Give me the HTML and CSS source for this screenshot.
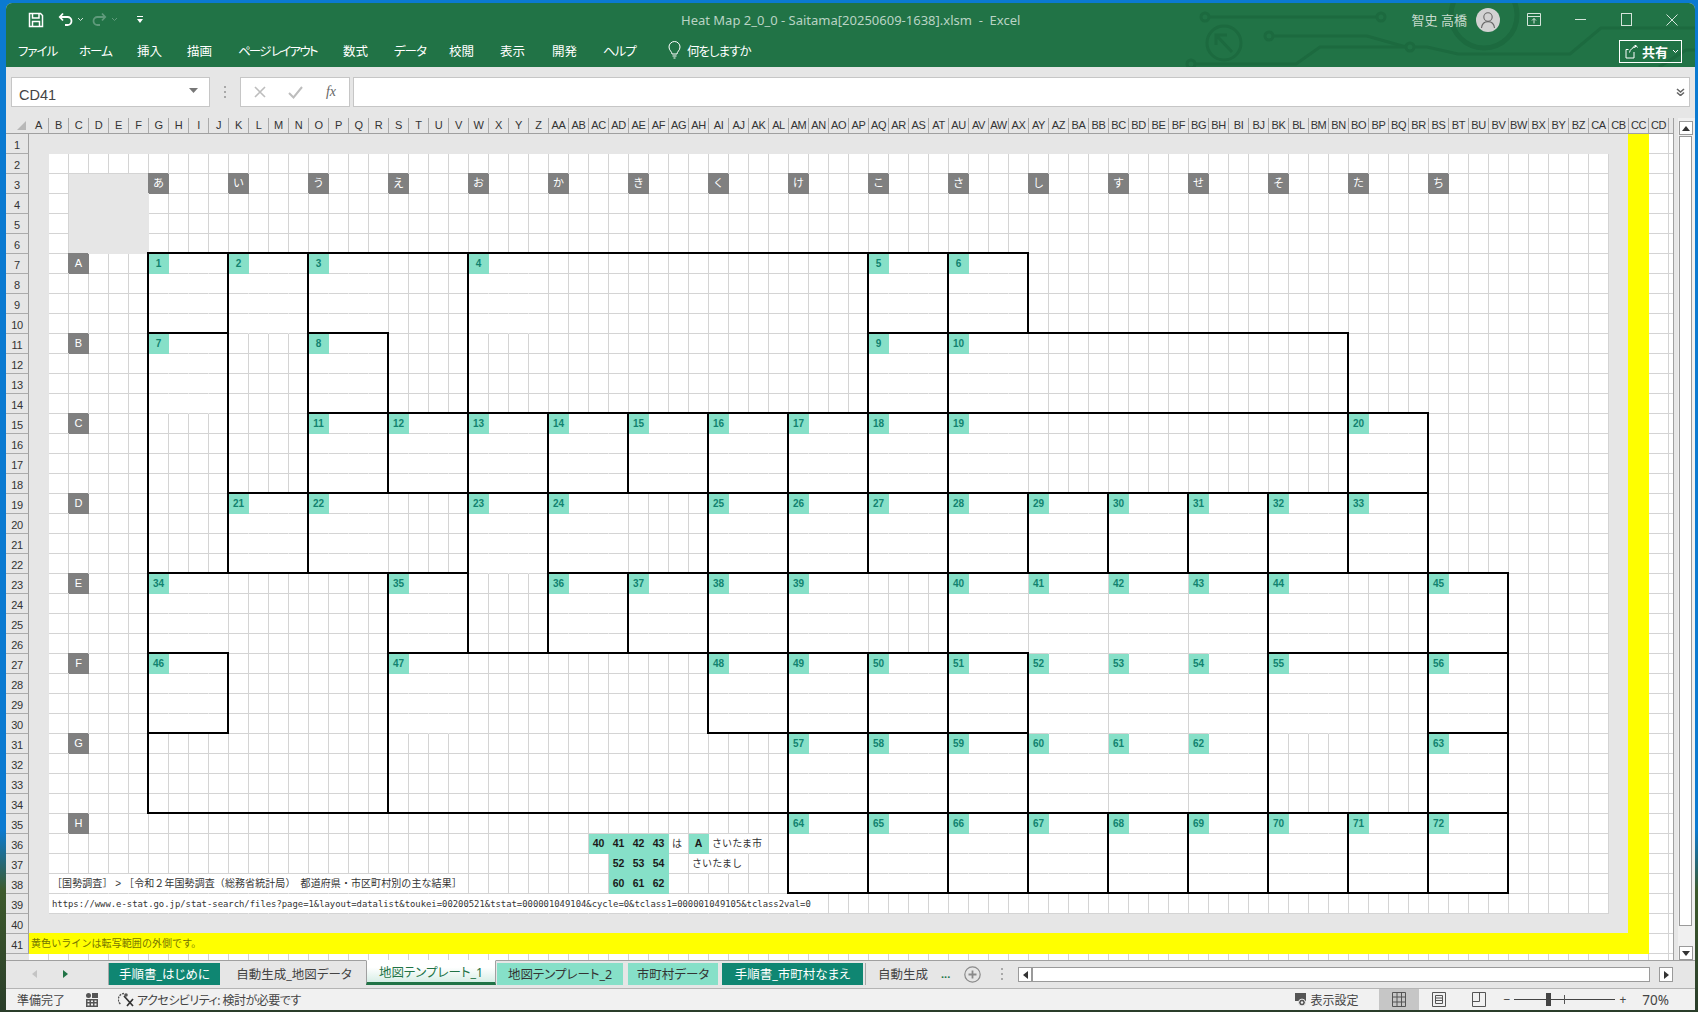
FILE: index.html
```html
<!DOCTYPE html>
<html lang="ja">
<head>
    <meta charset="UTF-8">
    <meta name="viewport" content="width=device-width, initial-scale=1.0">
    <title>Heat Map 2_0_0 - Saitama - Excel</title>
    <link rel="stylesheet" href="styles.css">
</head>
<body>
    <div class="window">
        <!-- Ribbon -->
        <div class="ribbon">
            <svg class="circuit" width="1689" height="64" viewBox="6 3 1689 64" fill="none" stroke="#1c6a3f" stroke-width="3">
                <circle cx="1205" cy="17" r="4"/>
                <path d="M1209 17H1377"/>
                <circle cx="1381" cy="17" r="4"/>
                <circle cx="1224" cy="43" r="17"/>
                <path d="M1232 52L1217 36M1216 45V35H1227"/>
                <circle cx="1269" cy="36" r="4"/>
                <path d="M1273 36H1367L1406 47"/>
                <circle cx="1410" cy="47" r="4"/>
                <circle cx="1191" cy="64" r="4"/>
                <path d="M1195 64H1296L1320 47H1406M1414 47H1427L1458 54H1570L1601 28H1695"/>
                <circle cx="1484" cy="15" r="33" stroke-width="5"/>
                <path d="M1659 67L1686 50H1695"/>
            </svg>
            <div class="titlebar">
                <div class="qat">
                    <svg width="16" height="16" viewBox="0 0 16 16" fill="none" stroke="#fff" stroke-width="1.5"><path d="M1.5 1.5H12.5L14.5 3.5V14.5H1.5Z"/><path d="M4.5 1.5V6H11V1.5M4.5 14.5V9.5H11.5V14.5"/></svg>
                    <svg class="qat-undo" width="15" height="15" viewBox="0 0 15 15" fill="none" stroke="#fff" stroke-width="1.8"><path d="M5 1.5L1.8 5L5 8.5M2 5H9.5A3.6 3.6 0 0 1 9.5 13H7"/></svg>
                    <svg class="qat-chev" width="7" height="5" viewBox="0 0 7 5" fill="none" stroke="#cfe0d6"><path d="M1 1L3.5 3.5L6 1"/></svg>
                    <svg class="qat-redo" width="15" height="15" viewBox="0 0 15 15" fill="none" stroke="#5f9a7b" stroke-width="1.8"><path d="M10 1.5L13.2 5L10 8.5M13 5H5.5A3.6 3.6 0 0 0 5.5 13H8"/></svg>
                    <svg class="qat-chev" width="7" height="5" viewBox="0 0 7 5" fill="none" stroke="#5f9a7b"><path d="M1 1L3.5 3.5L6 1"/></svg>
                    <svg class="qat-more" width="8" height="8" viewBox="0 0 8 8" fill="#fff"><path d="M1 0H7V1H1ZM1 3H7L4 7Z"/></svg>
                </div>
                <div class="doc-title">Heat Map 2_0_0 - Saitama[20250609-1638].xlsm &nbsp;-&nbsp; Excel</div>
                <div class="user-name">智史 高橋</div>
                <div class="avatar">
                    <svg width="24" height="24" viewBox="0 0 24 24" fill="none" stroke="#666" stroke-width="1.1"><circle cx="12" cy="9" r="4.2"/><path d="M5.5 20C6 15.5 8.5 13.6 12 13.6S18 15.5 18.5 20"/></svg>
                </div>
                <div class="win-btn"><svg width="14" height="13" viewBox="0 0 14 13" fill="none" stroke="#d5e4db"><path d="M.5 .5H13.5V12.5H.5ZM.5 3.5H13.5M7 10.5V5.5M5 7.5L7 5.5L9 7.5"/></svg></div>
                <div class="win-btn"><svg width="11" height="11" viewBox="0 0 11 11" stroke="#d5e4db"><path d="M0 5.5H11"/></svg></div>
                <div class="win-btn"><svg width="11" height="13" viewBox="0 0 11 13" fill="none" stroke="#d5e4db"><rect x=".5" y=".5" width="10" height="12"/></svg></div>
                <div class="win-btn"><svg width="12" height="12" viewBox="0 0 12 12" stroke="#d5e4db"><path d="M.5 .5L11.5 11.5M11.5 .5L.5 11.5"/></svg></div>
            </div>
            <div class="menubar">
                <span class="kana">ファイル</span>
                <span class="kana">ホーム</span>
                <span>挿入</span>
                <span>描画</span>
                <span class="kana-long">ページ レイアウト</span>
                <span>数式</span>
                <span class="kana">データ</span>
                <span>校閲</span>
                <span>表示</span>
                <span>開発</span>
                <span class="kana">ヘルプ</span>
                <svg width="13" height="18" viewBox="0 0 13 18" fill="none" stroke="#fff"><path d="M4 13C4 10.5 1 9.5 1 6A5.5 5.5 0 0 1 12 6C12 9.5 9 10.5 9 13ZM4.5 15H8.5M5.5 17H7.5"/></svg>
                <span class="kana">何をしますか</span>
                <div class="share">
                    <svg width="13" height="15" viewBox="0 0 13 15" fill="none" stroke="#fff"><path d="M8 3.5L10.5 1L12.5 3.5M10.5 1V3C7.5 3.5 5 5.5 4.5 8.5M3.5 5.5H1V14H9V8"/></svg>
                    <b>共有</b>
                    <svg width="7" height="5" viewBox="0 0 7 5" fill="none" stroke="#fff"><path d="M1 1L3.5 3.5L6 1"/></svg>
                </div>
            </div>
        </div>

        <!-- Name box and formula bar -->
        <div class="formula-row">
            <div class="name-box">
                <span>CD41</span>
                <svg width="9" height="5" viewBox="0 0 9 5" fill="#777"><path d="M0 0H9L4.5 5Z"/></svg>
            </div>
            <div class="grip"><i></i><i></i><i></i></div>
            <div class="fx-box">
                <svg width="12" height="12" viewBox="0 0 12 12" stroke="#bdbdbd" stroke-width="1.6"><path d="M1 1L11 11M11 1L1 11"/></svg>
                <svg width="15" height="13" viewBox="0 0 15 13" fill="none" stroke="#bdbdbd" stroke-width="2"><path d="M1 7L5.5 11.5L14 1"/></svg>
                <span class="fx">fx</span>
            </div>
            <div class="formula-input">
                <svg width="9" height="8" viewBox="0 0 9 8" fill="none" stroke="#666" stroke-width="1.6"><path d="M1 1L4.5 4L8 1M1 4.5L4.5 7.5L8 4.5"/></svg>
            </div>
        </div>

        <!-- Sheet -->
        <div class="sheet-view">
            <div class="sheet-body">
                <div class="head-row">
                    <div class="corner"><svg width="9" height="9" viewBox="0 0 9 9" fill="#b8b8b8"><path d="M9 0V9H0Z"/></svg></div>
                    <div class="col-heads" id="colHeads"></div>
                </div>
                <div class="grid-row">
                    <div class="row-heads" id="rowHeads"></div>
                    <div class="cells" id="cells"></div>
                </div>
            </div>
            <div class="vscroll">
                <div class="sb-btn"><svg width="8" height="5" viewBox="0 0 8 5" fill="#333"><path d="M4 0L8 5H0Z"/></svg></div>
                <div class="sb-thumb"></div>
                <div class="sb-btn"><svg width="8" height="5" viewBox="0 0 8 5" fill="#333"><path d="M0 0H8L4 5Z"/></svg></div>
            </div>
        </div>

        <!-- Sheet tabs -->
        <div class="tabbar">
            <div class="tab-nav">
                <svg width="5" height="8" viewBox="0 0 5 8" fill="#c4c4c4"><path d="M5 0V8L0 4Z"/></svg>
                <svg width="5" height="8" viewBox="0 0 5 8" fill="#217346"><path d="M0 0V8L5 4Z"/></svg>
            </div>
            <div class="tab tab-dark tab-intro">手順書_はじめに</div>
            <div class="tab tab-plain">自動生成_地図データ</div>
            <div class="tab tab-active">地図テンプレート_1</div>
            <div class="tab tab-light tab-map2">地図テンプレート_2</div>
            <div class="tab tab-light tab-city">市町村データ</div>
            <div class="tab tab-dark tab-names">手順書_市町村なまえ</div>
            <div class="tab tab-cut">自動生成</div>
            <span class="tab-more">...</span>
            <svg class="tab-add" width="17" height="17" viewBox="0 0 17 17" fill="none" stroke="#8a8a8a"><circle cx="8.5" cy="8.5" r="7.7" stroke-width="1.2"/><path d="M8.5 4.5V12.5M4.5 8.5H12.5" stroke-width="1.8"/></svg>
            <div class="grip grip-tabs"><i></i><i></i><i></i></div>
            <div class="hscroll">
                <div class="sb-btn"><svg width="5" height="8" viewBox="0 0 5 8" fill="#333"><path d="M5 0V8L0 4Z"/></svg></div>
                <div class="sb-thumb"></div>
                <div class="sb-btn sb-end"><svg width="5" height="8" viewBox="0 0 5 8" fill="#333"><path d="M0 0V8L5 4Z"/></svg></div>
            </div>
        </div>

        <!-- Status bar -->
        <div class="statusbar">
            <span class="status-ready">準備完了</span>
            <svg class="status-macro" width="12" height="14" viewBox="0 0 12 14" fill="#555"><circle cx="2.5" cy="2.5" r="2.5"/><path d="M6 0H12V5H6Z"/><path d="M0 6H12V14H0ZM1.5 7.5V9H3.5V7.5ZM5 7.5V9H7V7.5ZM8.5 7.5V9H10.5V7.5ZM1.5 10.5V12.5H3.5V10.5ZM5 10.5V12.5H7V10.5ZM8.5 10.5V12.5H10.5V10.5Z" fill-rule="evenodd"/></svg>
            <svg class="status-a11y" width="17" height="15" viewBox="0 0 17 15" fill="none" stroke="#555"><path d="M6 1.5A6 6 0 0 0 3 12.5" stroke-dasharray="2 1" stroke-width="1.4"/><path d="M6 4L15 14M15 7L9 14" stroke="#333" stroke-width="1.7"/><circle cx="8" cy="3" r="1.8" fill="#555" stroke="none"/></svg>
            <span class="status-a11y-text">アクセシビリティ: 検討が必要です</span>
            <div class="status-right">
                <svg width="12" height="14" viewBox="0 0 12 14"><path d="M0 0H11V8H0Z" fill="#555"/><circle cx="7" cy="9.5" r="3.4" fill="#555" stroke="#f1f1f1"/><circle cx="7" cy="9.5" r="1.2" fill="#f1f1f1"/></svg>
                <span class="status-display">表示設定</span>
                <div class="view-btn view-on"><svg width="14" height="15" viewBox="0 0 14 15" fill="none" stroke="#555"><path d="M.5 .5H13.5V14.5H.5ZM.5 5H13.5M.5 10H13.5M5 .5V14.5M9.5 .5V14.5"/></svg></div>
                <div class="view-btn"><svg width="14" height="15" viewBox="0 0 14 15" fill="none" stroke="#555"><path d="M.5 .5H13.5V14.5H.5ZM3.5 3.5H10.5V11.5H3.5ZM3.5 6H10.5M3.5 8.5H10.5"/></svg></div>
                <div class="view-btn"><svg width="14" height="15" viewBox="0 0 14 15" fill="none" stroke="#555"><path d="M.5 .5H13.5V14.5H.5ZM.5 9.5H7.5V.5"/></svg></div>
                <div class="zoom-slider">
                    <span>−</span>
                    <div class="zoom-track"><i class="zoom-tick"></i><i class="zoom-thumb"></i></div>
                    <span>+</span>
                </div>
                <span class="zoom-pct">70%</span>
            </div>
        </div>
    </div>
    <script src="sheet.js"></script>
</body>
</html>
```

FILE: styles.css
```css
* {
    box-sizing: border-box;
}
body {
    margin: 0;
    height: 1012px;
    padding: 3px 3px 2px 6px;
    overflow: hidden;
    font-family: "Noto Sans", "Noto Sans CJK JP", sans-serif;
    background: linear-gradient(#0b7ad1 0, #0b7ad1 82%, #3d5a2c 88%, #2a3d2a 100%);
}
.window {
    display: flex;
    flex-direction: column;
    height: 1007px;
    background-color: #e6e6e6;
    border-radius: 6px 6px 0 0;
    overflow: hidden;
}

/* ribbon */
.ribbon {
    position: relative;
    height: 64px;
    background-color: #217346;
    color: #fff;
}
.circuit {
    position: absolute;
    left: 0;
    top: 0;
}
.titlebar {
    position: relative;
    display: flex;
    align-items: center;
    height: 30px;
    padding-top: 3px;
}
.qat {
    display: flex;
    align-items: center;
    width: 675px;
    padding-left: 22px;
}
.qat-undo {
    margin-left: 14px;
}
.qat-redo {
    margin-left: 8px;
}
.qat-chev {
    margin-left: 4px;
}
.qat-more {
    margin-left: 18px;
}
.doc-title {
    font-size: 13px;
    color: #b9d3c4;
    white-space: nowrap;
}
.user-name {
    margin-left: auto;
    font-size: 13px;
    color: #c6dacd;
}
.avatar {
    display: flex;
    width: 24px;
    height: 24px;
    margin: 0 11px 0 9px;
    border-radius: 50%;
    background-color: #d2d2d2;
}
.win-btn {
    display: flex;
    align-items: center;
    justify-content: center;
    width: 46px;
    height: 24px;
}
.menubar {
    position: relative;
    display: grid;
    grid-template-columns: 61px 58px 50px 51px 105px 51px 55px 51px 52px 51px 65px 19px auto 1fr;
    align-items: center;
    height: 34px;
    padding: 0 13px 0 12px;
    font-size: 12.5px;
    font-feature-settings: "palt";
    white-space: nowrap;
}
.kana {
    letter-spacing: -1px;
}
.kana-long {
    letter-spacing: -1.8px;
}
.share {
    display: flex;
    align-items: center;
    justify-self: end;
    gap: 4px;
    width: 63px;
    height: 23px;
    margin-top: 2px;
    padding-left: 5px;
    border: 1px solid #fff;
    font-size: 13px;
}

/* formula bar */
.formula-row {
    display: flex;
    height: 51px;
    padding: 10px 5px 11px 5px;
}
.name-box {
    display: flex;
    align-items: center;
    justify-content: space-between;
    width: 199px;
    padding: 5px 11px 0 7px;
    background-color: #fff;
    border: 1px solid #c6c6c6;
    font-family: "Liberation Sans", sans-serif;
    font-size: 14.5px;
    color: #444;
}
.name-box svg {
    margin-top: -8px;
}
.grip {
    display: flex;
    flex-direction: column;
    align-items: center;
    justify-content: center;
    gap: 3px;
    width: 30px;
}
.grip i {
    width: 2px;
    height: 2px;
    background-color: #a8a8a8;
}
.fx-box {
    display: flex;
    align-items: center;
    justify-content: space-between;
    width: 110px;
    padding: 0 13px 0 13px;
    background-color: #fff;
    border: 1px solid #c6c6c6;
}
.fx {
    font-family: "Liberation Serif", serif;
    font-style: italic;
    font-size: 14px;
    color: #666;
}
.formula-input {
    display: flex;
    align-items: center;
    justify-content: flex-end;
    flex: 1;
    margin-left: 3px;
    padding-right: 4px;
    background-color: #fff;
    border: 1px solid #c6c6c6;
}

/* sheet */
.sheet-view {
    display: flex;
    flex: 1;
    min-height: 0;
}
.sheet-body {
    display: flex;
    flex-direction: column;
    width: 1667px;
    overflow: hidden;
}
.head-row {
    display: flex;
    height: 16px;
}
.corner {
    display: flex;
    flex: none;
    align-items: flex-end;
    justify-content: flex-end;
    width: 23px;
    padding: 0 3px 3px 0;
    border-bottom: 1px solid #a0a0a0;
}
.col-heads {
    display: flex;
    border-bottom: 1px solid #a0a0a0;
}
.col-head {
    flex: none;
    width: 20px;
    border-right: 1px solid #ababab;
    font-family: "Liberation Sans", sans-serif;
    font-size: 11px;
    letter-spacing: -0.4px;
    line-height: 15px;
    text-align: center;
    color: #333;
}
.grid-row {
    display: flex;
    flex: 1;
}
.row-heads {
    flex: none;
    width: 23px;
}
.row-head {
    height: 20px;
    padding-top: 4px;
    border-right: 1px solid #a0a0a0;
    border-bottom: 1px solid #ababab;
    font-family: "Liberation Sans", sans-serif;
    font-size: 11px;
    letter-spacing: -0.3px;
    line-height: 15px;
    text-align: center;
    color: #333;
}
.cells {
    position: relative;
    display: grid;
    grid-template-columns: repeat(83, 20px);
    grid-auto-rows: 20px;
    flex: none;
    width: 1644px;
    height: 826px;
    overflow: hidden;
    background-color: #fff;
}
.cell {
    border-right: 1px solid #d4d4d4;
    border-bottom: 1px solid #d4d4d4;
    font-family: "Liberation Sans", "Noto Sans CJK JP", sans-serif;
    white-space: nowrap;
}
.merged {
    border-right-color: transparent;
}
.gray {
    background-color: #e6e6e6;
    border-color: #e6e6e6;
}
.yellow {
    background-color: #ff0;
    border-color: #ff0;
    box-shadow: -1px -1px 0 #ff0;
}
.dark {
    background-color: #808080;
    border-color: #808080;
    box-shadow: -1px -1px 0 #808080;
    font-size: 11px;
    line-height: 19px;
    text-align: center;
    color: #fff;
}
.tile {
    background-color: #86e0c8;
    border-color: #86e0c8;
    font-weight: bold;
    font-size: 10px;
    line-height: 19px;
    text-align: center;
    color: #12826f;
}
.tile-key {
    font-size: 10.5px;
    color: #1a1a1a;
}
.note {
    z-index: 1;
    padding-left: 3px;
    font-size: 10px;
    letter-spacing: 0.08px;
    line-height: 19px;
    color: #333;
}
.note-url {
    font-family: "DejaVu Sans Mono", monospace;
    font-size: 8.9px;
    letter-spacing: 0;
    line-height: 21px;
}
.note-yellow {
    padding-left: 2px;
    color: #757500;
}
.borders {
    position: absolute;
    left: 0;
    top: 0;
    z-index: 2;
    pointer-events: none;
}
.vscroll {
    display: flex;
    flex-direction: column;
    width: 22px;
    padding: 3px 3px 0 5px;
    border-left: 1px solid #a0a0a0;
    background: linear-gradient(90deg, #e6e6e6 4px, #f0f0f0 4px);
}
.sb-btn {
    display: flex;
    flex: none;
    align-items: center;
    justify-content: center;
    width: 14px;
    height: 14px;
    background-color: #fff;
    border: 1px solid #9a9a9a;
}
.sb-thumb {
    background-color: #fff;
    border: 1px solid #9a9a9a;
}
.vscroll .sb-thumb {
    height: 790px;
    margin: 1px 0 20px 0;
}

/* tabs */
.tabbar {
    display: flex;
    align-items: flex-start;
    height: 28px;
    padding-top: 2px;
    border-top: 1px solid #a0a0a0;
    font-size: 12.5px;
    white-space: nowrap;
}
.tab-nav {
    display: flex;
    justify-content: space-between;
    width: 103px;
    height: 22px;
    padding: 7px 40px 0 26px;
    border-right: 1px solid #a8a8a8;
}
.tab {
    display: flex;
    align-items: center;
    justify-content: center;
    height: 22px;
    padding-bottom: 2px;
    font-feature-settings: "palt";
}
.tab-dark {
    background-color: #0f8672;
    color: #fff;
}
.tab-light {
    background-color: #86e0c8;
    color: #333;
}
.tab-intro {
    width: 111px;
}
.tab-plain {
    width: 144px;
    margin-left: 2px;
    color: #444;
}
.tab-active {
    width: 130px;
    height: 25px;
    margin-top: -3px;
    padding-top: 1px;
    border: 1px solid #a0a0a0;
    border-top-color: #fff;
    border-bottom: 3px solid #217346;
    background: linear-gradient(#fff 30%, #d8eee6);
    color: #217346;
}
.tab-map2 {
    width: 126px;
    margin-left: 1px;
}
.tab-city {
    width: 90px;
    margin-left: 5px;
}
.tab-names {
    width: 141px;
    margin-left: 4px;
}
.tab-cut {
    width: 66px;
    margin-left: 2px;
    padding-left: 12px;
    border-left: 1px solid #a8a8a8;
    justify-content: flex-start;
    color: #444;
}
.tab-more {
    margin-left: 10px;
    font-weight: bold;
    font-size: 11px;
    line-height: 22px;
    color: #217346;
}
.tab-add {
    margin: 3px 0 0 14px;
}
.grip-tabs {
    width: 2px;
    height: 22px;
    margin-left: 20px;
}
.hscroll {
    display: flex;
    margin: 4px 0 0 15px;
    height: 15px;
}
.hscroll .sb-btn {
    height: 15px;
}
.hscroll .sb-thumb {
    width: 618px;
}
.sb-end {
    margin-left: 9px;
}

/* status bar */
.statusbar {
    display: flex;
    align-items: center;
    height: 22px;
    padding-left: 11px;
    background-color: #f1f1f1;
    border-top: 1px solid #b4b4b4;
    font-size: 12px;
    color: #444;
    white-space: nowrap;
}
.status-macro {
    margin-left: 21px;
}
.status-a11y {
    margin-left: 20px;
}
.status-a11y-text {
    margin-left: 2px;
    letter-spacing: -0.5px;
    font-feature-settings: "palt";
}
.status-right {
    display: flex;
    align-items: center;
    align-self: stretch;
    margin-left: auto;
    padding-right: 26px;
}
.status-display {
    margin: 0 20px 0 4px;
}
.view-btn {
    display: flex;
    align-items: center;
    justify-content: center;
    width: 40px;
    height: 100%;
}
.view-on {
    background-color: #c6c6c6;
}
.zoom-slider {
    display: flex;
    align-items: center;
    gap: 4px;
    margin-left: 5px;
}
.zoom-track {
    position: relative;
    width: 101px;
    height: 1px;
    background-color: #444;
}
.zoom-tick {
    position: absolute;
    left: 50px;
    top: -4px;
    width: 1px;
    height: 9px;
    background-color: #555;
}
.zoom-thumb {
    position: absolute;
    left: 32px;
    top: -6px;
    width: 5px;
    height: 13px;
    background-color: #444;
}
.zoom-pct {
    margin-left: 16px;
    font-size: 13.5px;
}
```

FILE: sheet.js
```js
// builds the worksheet: 83 columns x 42 rows of 20px cells
var COLS = 83, ROWS = 42;

// vertical gridlines are gone inside merged blocks, one string per 4-row band
// each char is a 4-column block starting at column G, '#' = merged
var MERGED = [
    '###.#....##.......',
    '#.#......##.......',
    '..#########....#..',
    '.##.##.#########..',
    '#..#.####.#####.#.',
    '#..#...########.#.',
    '........######..#.',
    '........#########.'
];

// numbered tiles as [block column, band]
var TILES = [
    [0,0],[1,0],[2,0],[4,0],[9,0],[10,0],
    [0,1],[2,1],[9,1],[10,1],
    [2,2],[3,2],[4,2],[5,2],[6,2],[7,2],[8,2],[9,2],[10,2],[15,2],
    [1,3],[2,3],[4,3],[5,3],[7,3],[8,3],[9,3],[10,3],[11,3],[12,3],[13,3],[14,3],[15,3],
    [0,4],[3,4],[5,4],[6,4],[7,4],[8,4],[10,4],[11,4],[12,4],[13,4],[14,4],[16,4],
    [0,5],[3,5],[7,5],[8,5],[9,5],[10,5],[11,5],[12,5],[13,5],[14,5],[16,5],
    [8,6],[9,6],[10,6],[11,6],[12,6],[13,6],[16,6],
    [8,7],[9,7],[10,7],[11,7],[12,7],[13,7],[14,7],[15,7],[16,7]
];

// black map outlines in block units
var H_LINES = [
    [0,0,11],
    [1,0,1],[1,2,3],[1,9,15],
    [2,2,16],
    [3,1,16],
    [4,0,4],[4,5,17],
    [5,0,1],[5,3,11],[5,14,17],
    [6,0,1],[6,7,11],[6,16,17],
    [7,0,17],
    [8,8,17]
];
var V_LINES = [
    [0,0,7],
    [1,0,4],[1,5,6],
    [2,0,4],
    [3,1,3],[3,4,7],
    [4,0,5],
    [5,2,5],
    [6,2,3],[6,4,5],
    [7,2,6],
    [8,2,8],
    [9,0,4],[9,5,8],
    [10,0,8],
    [11,0,1],[11,3,4],[11,5,8],
    [12,3,4],[12,7,8],
    [13,3,4],[13,7,8],
    [14,3,8],
    [15,1,4],[15,7,8],
    [16,2,8],
    [17,4,8]
];

var KANA = 'あいうえおかきくけこさしすせそたち';
var BANDS = 'ABCDEFGH';

function colName(n) {
    var s = '';
    while (n > 0) {
        s = String.fromCharCode(65 + (n - 1) % 26) + s;
        n = Math.floor((n - 1) / 26);
    }
    return s;
}

function key(c, r) {
    return c + ':' + r;
}

function put(map, c, r, text, cls) {
    map[key(c, r)] = {text: text, cls: cls};
}

// everything that is not a plain empty cell
var content = {};
TILES.forEach(function (t, i) {
    put(content, 7 + t[0] * 4, 7 + t[1] * 4, String(i + 1), 'tile');
});
KANA.split('').forEach(function (k, i) {
    put(content, 7 + i * 4, 3, k, 'dark');
});
BANDS.split('').forEach(function (b, i) {
    put(content, 3, 7 + i * 4, b, 'dark');
});
[[29,36,40],[30,36,41],[31,36,42],[32,36,43],[30,37,52],[31,37,53],[32,37,54],[30,38,60],[31,38,61],[32,38,62]].forEach(function (k) {
    put(content, k[0], k[1], String(k[2]), 'tile tile-key');
});
put(content, 34, 36, 'A', 'tile tile-key');
put(content, 33, 36, 'は', 'note');
put(content, 35, 36, 'さいたま市', 'note');
put(content, 34, 37, 'さいたまし', 'note');
put(content, 2, 38, '［国勢調査］ > ［令和２年国勢調査（総務省統計局）　都道府県・市区町村別の主な結果］', 'note');
put(content, 2, 39, 'https://www.e-stat.go.jp/stat-search/files?page=1&layout=datalist&toukei=00200521&tstat=000001049104&cycle=0&tclass1=000001049105&tclass2val=0', 'note note-url');
put(content, 1, 41, '黄色いラインは転写範囲の外側です。', 'note note-yellow');

// cells that long text runs across lose their gridline
function underText(c, r) {
    return (r === 36 && c >= 35 && c <= 36) ||
        (r === 37 && c >= 34 && c <= 35) ||
        (r === 38 && c >= 2 && c <= 21) ||
        (r === 39 && c >= 2 && c <= 39);
}

function isMerged(c, r) {
    if (r < 7 || r > 38 || c < 7 || c > 78) return false;
    var band = MERGED[(r - 7) >> 2];
    return band[(c - 7) >> 2] === '#' && (c - 7) % 4 < 3;
}

function isGray(c, r) {
    return (r === 1 && c <= 80) || (c === 1 && r <= 40) || (c === 80 && r <= 40) ||
        (r === 40 && c <= 80) || (c >= 3 && c <= 6 && r >= 3 && r <= 6);
}

function isYellow(c, r) {
    return (c === 81 && r <= 41) || (r === 41 && c <= 81);
}

var cells = document.getElementById('cells');
for (var r = 1; r <= ROWS; r++) {
    for (var c = 1; c <= COLS; c++) {
        var div = document.createElement('div');
        var cls = 'cell';
        var item = content[key(c, r)];
        if (isMerged(c, r) || underText(c, r)) cls += ' merged';
        if (isYellow(c, r)) cls += ' yellow';
        else if (isGray(c, r)) cls += ' gray';
        if (item) {
            cls += ' ' + item.cls;
            div.textContent = item.text;
        }
        div.className = cls;
        cells.appendChild(div);
    }
}

// headers, the last column is cut by the scrollbar so it gets no label
var colHeads = document.getElementById('colHeads');
for (var i = 1; i <= COLS; i++) {
    var head = document.createElement('div');
    head.className = 'col-head';
    if (i < COLS) head.textContent = colName(i);
    colHeads.appendChild(head);
}
var rowHeads = document.getElementById('rowHeads');
for (var j = 1; j <= 41; j++) {
    var rowHead = document.createElement('div');
    rowHead.className = 'row-head';
    rowHead.textContent = j;
    rowHeads.appendChild(rowHead);
}

// outlines go over the cells as one path
var d = '';
H_LINES.forEach(function (l) {
    d += 'M' + (119 + l[1] * 80) + ' ' + (119 + l[0] * 80) + 'H' + (119 + l[2] * 80);
});
V_LINES.forEach(function (l) {
    d += 'M' + (119 + l[0] * 80) + ' ' + (119 + l[1] * 80) + 'V' + (119 + l[2] * 80);
});
var NS = 'http://www.w3.org/2000/svg';
var svg = document.createElementNS(NS, 'svg');
svg.setAttribute('class', 'borders');
svg.setAttribute('width', '1644');
svg.setAttribute('height', '826');
var path = document.createElementNS(NS, 'path');
path.setAttribute('d', d);
path.setAttribute('fill', 'none');
path.setAttribute('stroke', '#000');
path.setAttribute('stroke-width', '2');
path.setAttribute('stroke-linecap', 'square');
path.setAttribute('shape-rendering', 'crispEdges');
svg.appendChild(path);
cells.appendChild(svg);
```
